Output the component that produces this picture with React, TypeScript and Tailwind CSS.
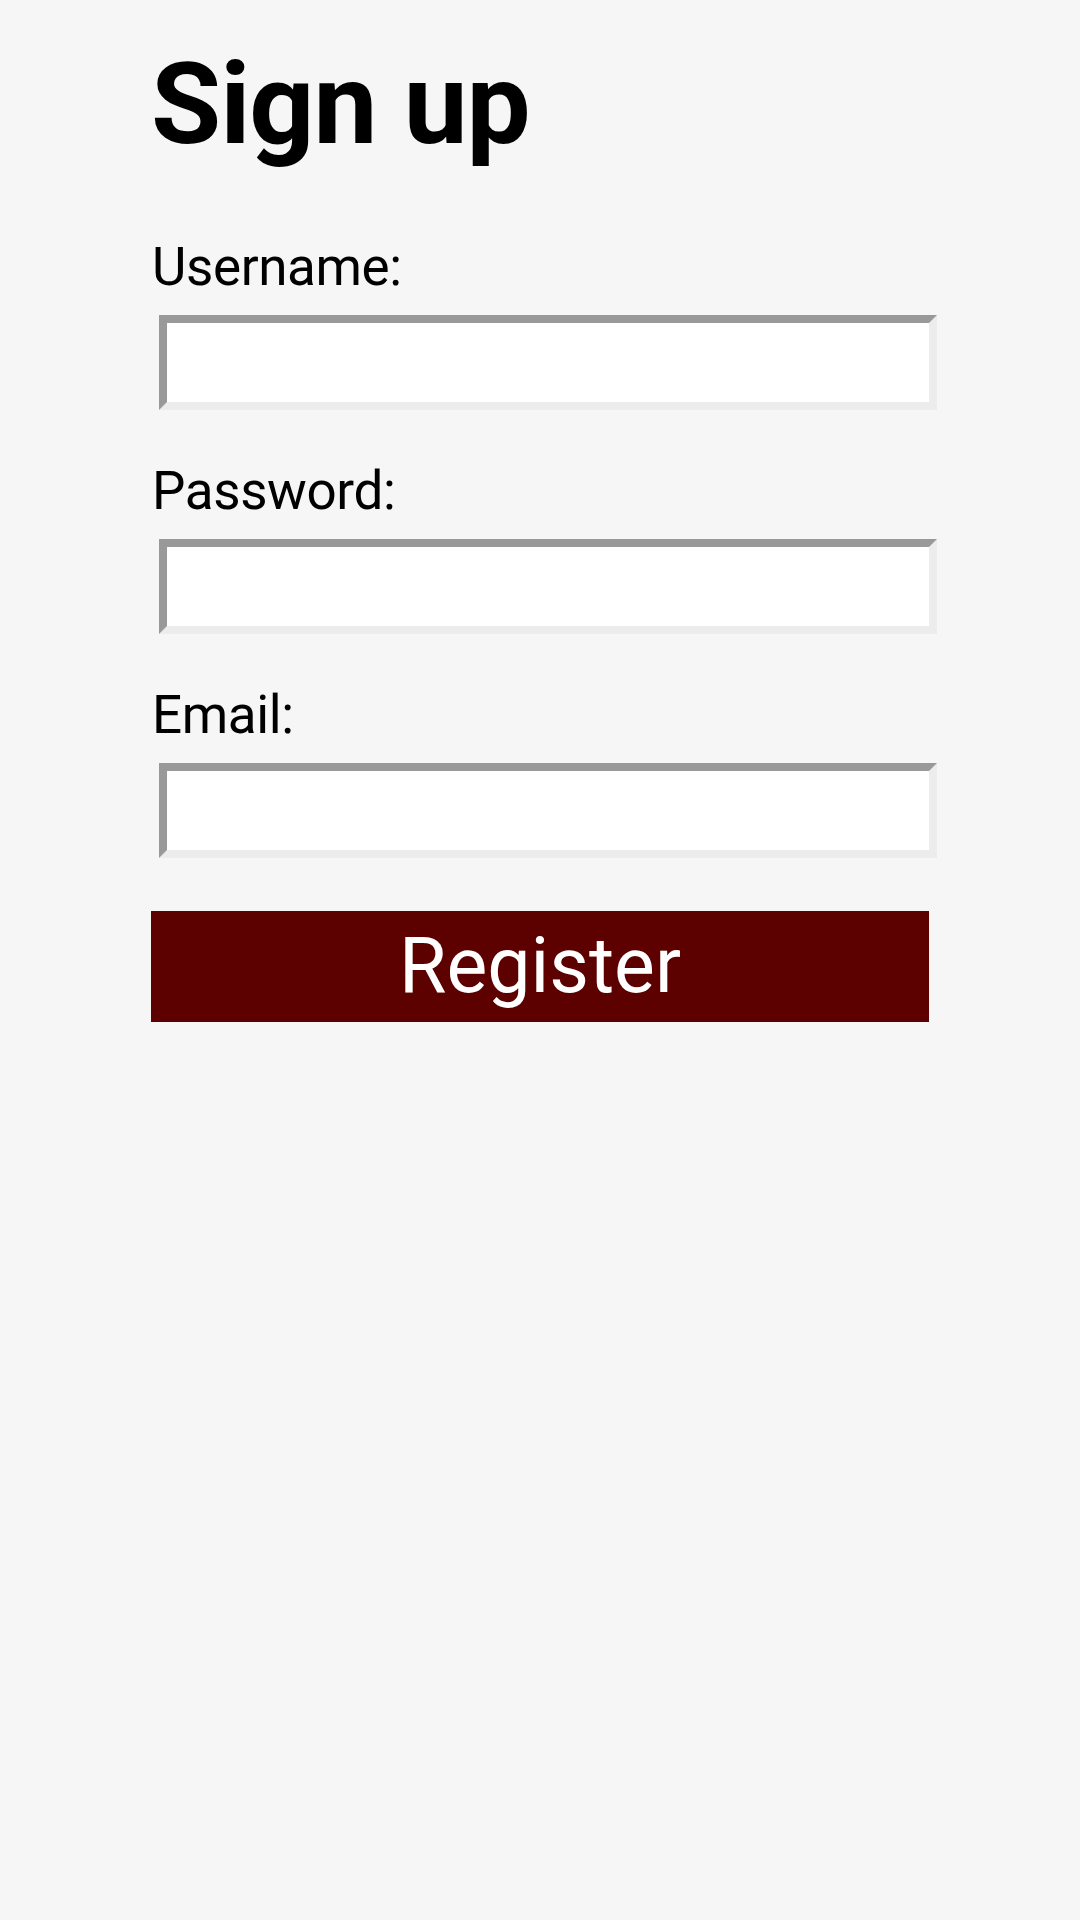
export default function App() {
  const fields = [
    { id: 'username', label: 'Username:', type: 'text' },
    { id: 'password', label: 'Password:', type: 'password' },
    { id: 'email', label: 'Email:', type: 'email' },
  ];

  return (
    <div className="min-h-[1920px] w-full bg-[#f6f6f6] font-['Roboto',_sans-serif] text-black">
      <div className="mx-auto w-[778px] pt-[37px]">
        <h1 className="text-[114px] font-bold leading-[normal] tracking-[-1px]">Sign up</h1>

        <form className="mt-[65px] flex flex-col" onSubmit={(e) => e.preventDefault()}>
          {fields.map((f, i) => (
            <div key={f.id} className={i === 0 ? '' : 'mt-[50px]'}>
              <label htmlFor={f.id} className="block pl-px text-[53px] leading-[62px] tracking-[-0.4px]">
                {f.label}
              </label>
              <input
                id={f.id}
                type={f.type}
                className="mt-[17px] ml-2 box-border block h-[95px] w-full border-8 border-t-[#999999] border-l-[#999999] border-r-[#ececec] border-b-[#ececec] bg-white px-2 text-[53px] outline-none"
              />
            </div>
          ))}

          <button
            type="submit"
            className="mt-[53px] h-[111px] w-full bg-[#5c0000] text-[77px] leading-none text-white"
          >
            Register
          </button>
        </form>
      </div>
    </div>
  );
}
